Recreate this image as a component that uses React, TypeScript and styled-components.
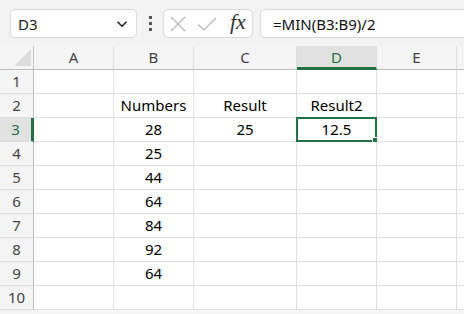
import styled, { createGlobalStyle } from "styled-components"

const Global = createGlobalStyle`
  html, body { margin: 0; padding: 0; background: #fff; }
  body { font-family: "Noto Sans", "Open Sans", sans-serif; }
`

const cols = ["A", "B", "C", "D", "E", ""]
const widths = [80, 80, 103, 80, 80, 40]

const rows: string[][] = [
  ["", "", "", "", "", ""],
  ["", "Numbers", "Result", "Result2", "", ""],
  ["", "28", "25", "12.5", "", ""],
  ["", "25", "", "", "", ""],
  ["", "44", "", "", "", ""],
  ["", "64", "", "", "", ""],
  ["", "84", "", "", "", ""],
  ["", "92", "", "", "", ""],
  ["", "64", "", "", "", ""],
  ["", "", "", "", "", ""],
]

const App = () => {
  return (
    <Page>
      <Global />
      <Toolbar>
        <NameBox>
          <span>D3</span>
          <svg width="12" height="8" viewBox="0 0 12 8">
            <path d="M1.5 1.8 L6 6.2 L10.5 1.8" fill="none" stroke="#222" strokeWidth="1.6" />
          </svg>
        </NameBox>
        <Kebab>
          <i />
          <i />
          <i />
        </Kebab>
        <IconBox>
          <svg width="16" height="16" viewBox="0 0 16 16">
            <path d="M1 1 L15 15 M15 1 L1 15" stroke="#b4b4b4" strokeWidth="1.2" />
          </svg>
          <svg width="20" height="16" viewBox="0 0 20 16">
            <path d="M1 8.5 L7 14 L19 2" fill="none" stroke="#b4b4b4" strokeWidth="1.2" />
          </svg>
          <Fx>fx</Fx>
        </IconBox>
        <FormulaInput>=MIN(B3:B9)/2</FormulaInput>
      </Toolbar>
      <Sheet>
        <Corner>
          <svg width="17" height="17" viewBox="0 0 17 17">
            <path d="M17 0 L17 17 L0 17 Z" fill="#dcdcdc" />
          </svg>
        </Corner>
        {cols.map((c, i) => (
          <ColHead key={c + i} $w={widths[i]} $active={c === "D"}>
            {c}
          </ColHead>
        ))}
        {rows.map((r, ri) => (
          <Row key={ri}>
            <RowHead $active={ri === 2}>{ri + 1}</RowHead>
            {r.map((v, ci) => (
              <Cell key={ci} $w={widths[ci]}>
                {v}
                {ri === 2 && ci === 3 && <Selection />}
              </Cell>
            ))}
          </Row>
        ))}
      </Sheet>
    </Page>
  )
}

export default App

const Page = styled.div`
  width: 464px;
  height: 314px;
  overflow: hidden;
  background: #f5f5f5;
`
const Toolbar = styled.div`
  height: 46px;
  display: flex;
  align-items: flex-start;
  padding-top: 9px;
  padding-left: 10px;
  box-sizing: border-box;
  background: #f3f3f3;
`
const NameBox = styled.div`
  width: 127px;
  height: 29px;
  box-sizing: border-box;
  border: 1px solid #dadada;
  border-radius: 5px;
  background: #fff;
  display: flex;
  align-items: center;
  justify-content: space-between;
  padding: 0 8px 0 7px;
  font-size: 15px;
  color: #222;
`
const Kebab = styled.div`
  width: 26px;
  height: 29px;
  display: flex;
  flex-direction: column;
  align-items: center;
  justify-content: center;
  gap: 3px;
  i {
    width: 3px;
    height: 3px;
    background: #555;
  }
`
const IconBox = styled.div`
  width: 90px;
  height: 29px;
  box-sizing: border-box;
  border: 1px solid #dadada;
  border-radius: 5px;
  background: #fff;
  display: flex;
  align-items: center;
  gap: 11px;
  padding-left: 6px;
`
const Fx = styled.span`
  font-family: "Liberation Serif", "DejaVu Serif", serif;
  font-style: italic;
  font-size: 22px;
  color: #333;
  margin-left: 2px;
  margin-top: -4px;
`
const FormulaInput = styled.div`
  flex: 1;
  height: 29px;
  margin-left: 7px;
  margin-right: -6px;
  box-sizing: border-box;
  border: 1px solid #dadada;
  border-radius: 5px 0 0 5px;
  background: #fff;
  display: flex;
  align-items: center;
  padding-left: 12px;
  font-size: 15px;
  color: #111;
`
const Sheet = styled.div`
  display: flex;
  flex-wrap: wrap;
  width: 500px;
`
const Corner = styled.div`
  border-right: 1px solid #c8c8c8;
  border-bottom: 1px solid #bdbdbd;
  display: flex;
  align-items: flex-end;
  justify-content: flex-end;
  padding: 0 2px 3px 0;
  width: 31px;
  height: 20px;
  background: #f5f5f5;
`
const ColHead = styled.div<{ $w: number; $active: boolean }>`
  width: ${(p) => p.$w - 1}px;
  padding-top: 2px;
  text-align: center;
  font-size: 15px;
  line-height: 19px;
  color: ${(p) => (p.$active ? "#217346" : "#444")};
  background: ${(p) => (p.$active ? "#e1e1e1" : "#f5f5f5")};
  border-right: 1px solid #dcdcdc;
  border-bottom: ${(p) => (p.$active ? "3px solid #217346" : "1px solid #bdbdbd")};
  height: ${(p) => (p.$active ? 19 : 21)}px;
`
const Row = styled.div`
  display: flex;
  width: 100%;
`
const RowHead = styled.div<{ $active: boolean }>`
  width: ${(p) => (p.$active ? 31 : 33)}px;
  height: 23px;
  line-height: 23px;
  text-align: center;
  font-size: 15px;
  color: ${(p) => (p.$active ? "#217346" : "#444")};
  background: ${(p) => (p.$active ? "#e1e1e1" : "#f5f5f5")};
  border-right: ${(p) => (p.$active ? "3px solid #217346" : "1px solid #bdbdbd")};
  border-bottom: 1px solid #dcdcdc;
`
const Cell = styled.div<{ $w: number }>`
  position: relative;
  width: ${(p) => p.$w - 1}px;
  height: 23px;
  line-height: 23px;
  text-align: center;
  font-size: 15px;
  color: #000;
  background: #fff;
  border-right: 1px solid #e1e1e1;
  border-bottom: 1px solid #e1e1e1;
`
const Selection = styled.span`
  position: absolute;
  left: -1px;
  top: -1px;
  width: 81px;
  height: 25px;
  box-sizing: border-box;
  border: 2px solid #217346;
  &::after {
    content: "";
    position: absolute;
    right: -4px;
    bottom: -4px;
    width: 5px;
    height: 5px;
    background: #217346;
    border: 1px solid #fff;
  }
`
